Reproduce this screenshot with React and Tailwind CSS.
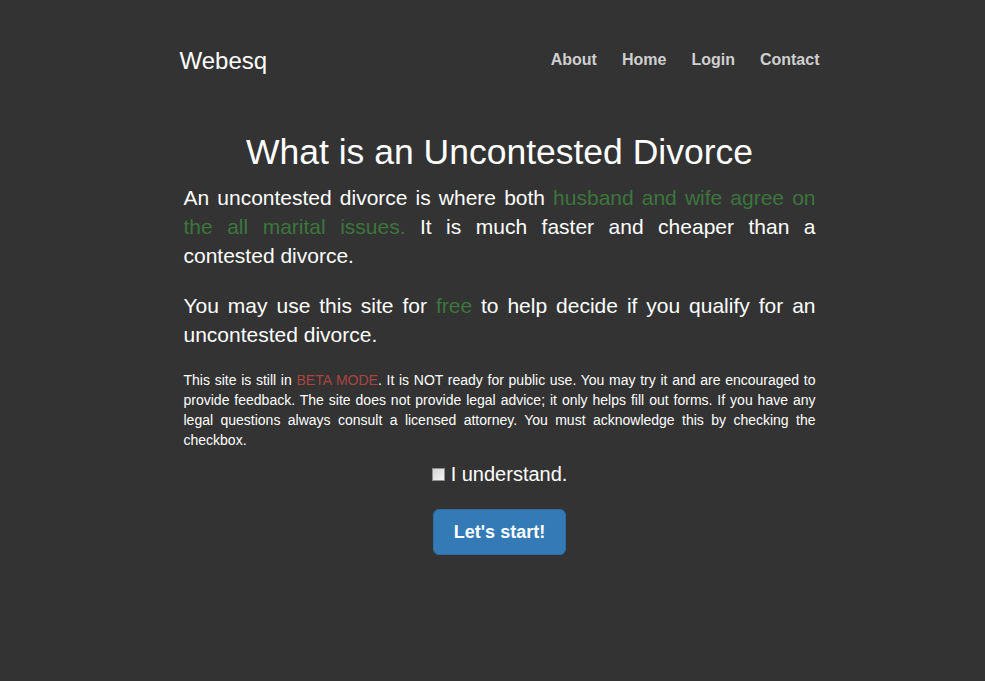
export default function App() {
  return (
    <div className="min-h-[681px] w-full bg-[#333333] text-white" style={{ fontFamily: '"Liberation Sans", Arial, sans-serif' }}>
      <div className="flex justify-center pl-[14px]">
        <div className="w-[640px]">
          <header className="flex justify-between pt-[46px] h-[110px] items-start">
            <div className="text-[24px] leading-[30px] text-white">Webesq</div>
            <nav className="flex gap-[25px] pt-[2px] text-[16px] font-bold leading-[24px] text-[#cfcfcf]">
              <a>About</a>
              <a>Home</a>
              <a>Login</a>
              <a>Contact</a>
            </nav>
          </header>
          <main className="px-[4px] pt-[23px]">
            <h1 className="text-center text-[35.5px] leading-[39.6px] mb-[10px]">What is an Uncontested Divorce</h1>
            <p className="text-justify text-[21px] leading-[29.4px] mb-[20px]">
              An uncontested divorce is where both <span className="text-[#3c763d]">husband and wife agree on the all marital issues.</span> It is much faster and cheaper than a contested divorce.
            </p>
            <p className="text-justify text-[21px] leading-[29.4px] mb-[20px]">
              You may use this site for <span className="text-[#3c763d]">free</span> to help decide if you qualify for an uncontested divorce.
            </p>
            <p className="text-justify text-[14px] leading-[20px]">
              This site is still in <span className="text-[#a94442]">BETA MODE</span>. It is NOT ready for public use. You may try it and are encouraged to provide feedback. The site does not provide legal advice; it only helps fill out forms. If you have any legal questions always consult a licensed attorney. You must acknowledge this by checking the checkbox.
            </p>
            <div className="mt-[10px] flex items-center justify-center text-[20px] leading-[29.4px]">
              <span className="mr-[6px] mt-[1px] inline-block h-[13px] w-[13px] border border-[#8f8f8f] bg-gradient-to-br from-[#d4d4d4] to-[#f6f6f6]"></span>
              <span>I understand.</span>
            </div>
            <div className="mt-[20px] flex justify-center">
              <button className="h-[46px] rounded-[6px] border border-[#2e6da4] bg-[#337ab7] px-[20px] text-[18px] font-bold text-white">
                Let's start!
              </button>
            </div>
          </main>
        </div>
      </div>
    </div>
  );
}
